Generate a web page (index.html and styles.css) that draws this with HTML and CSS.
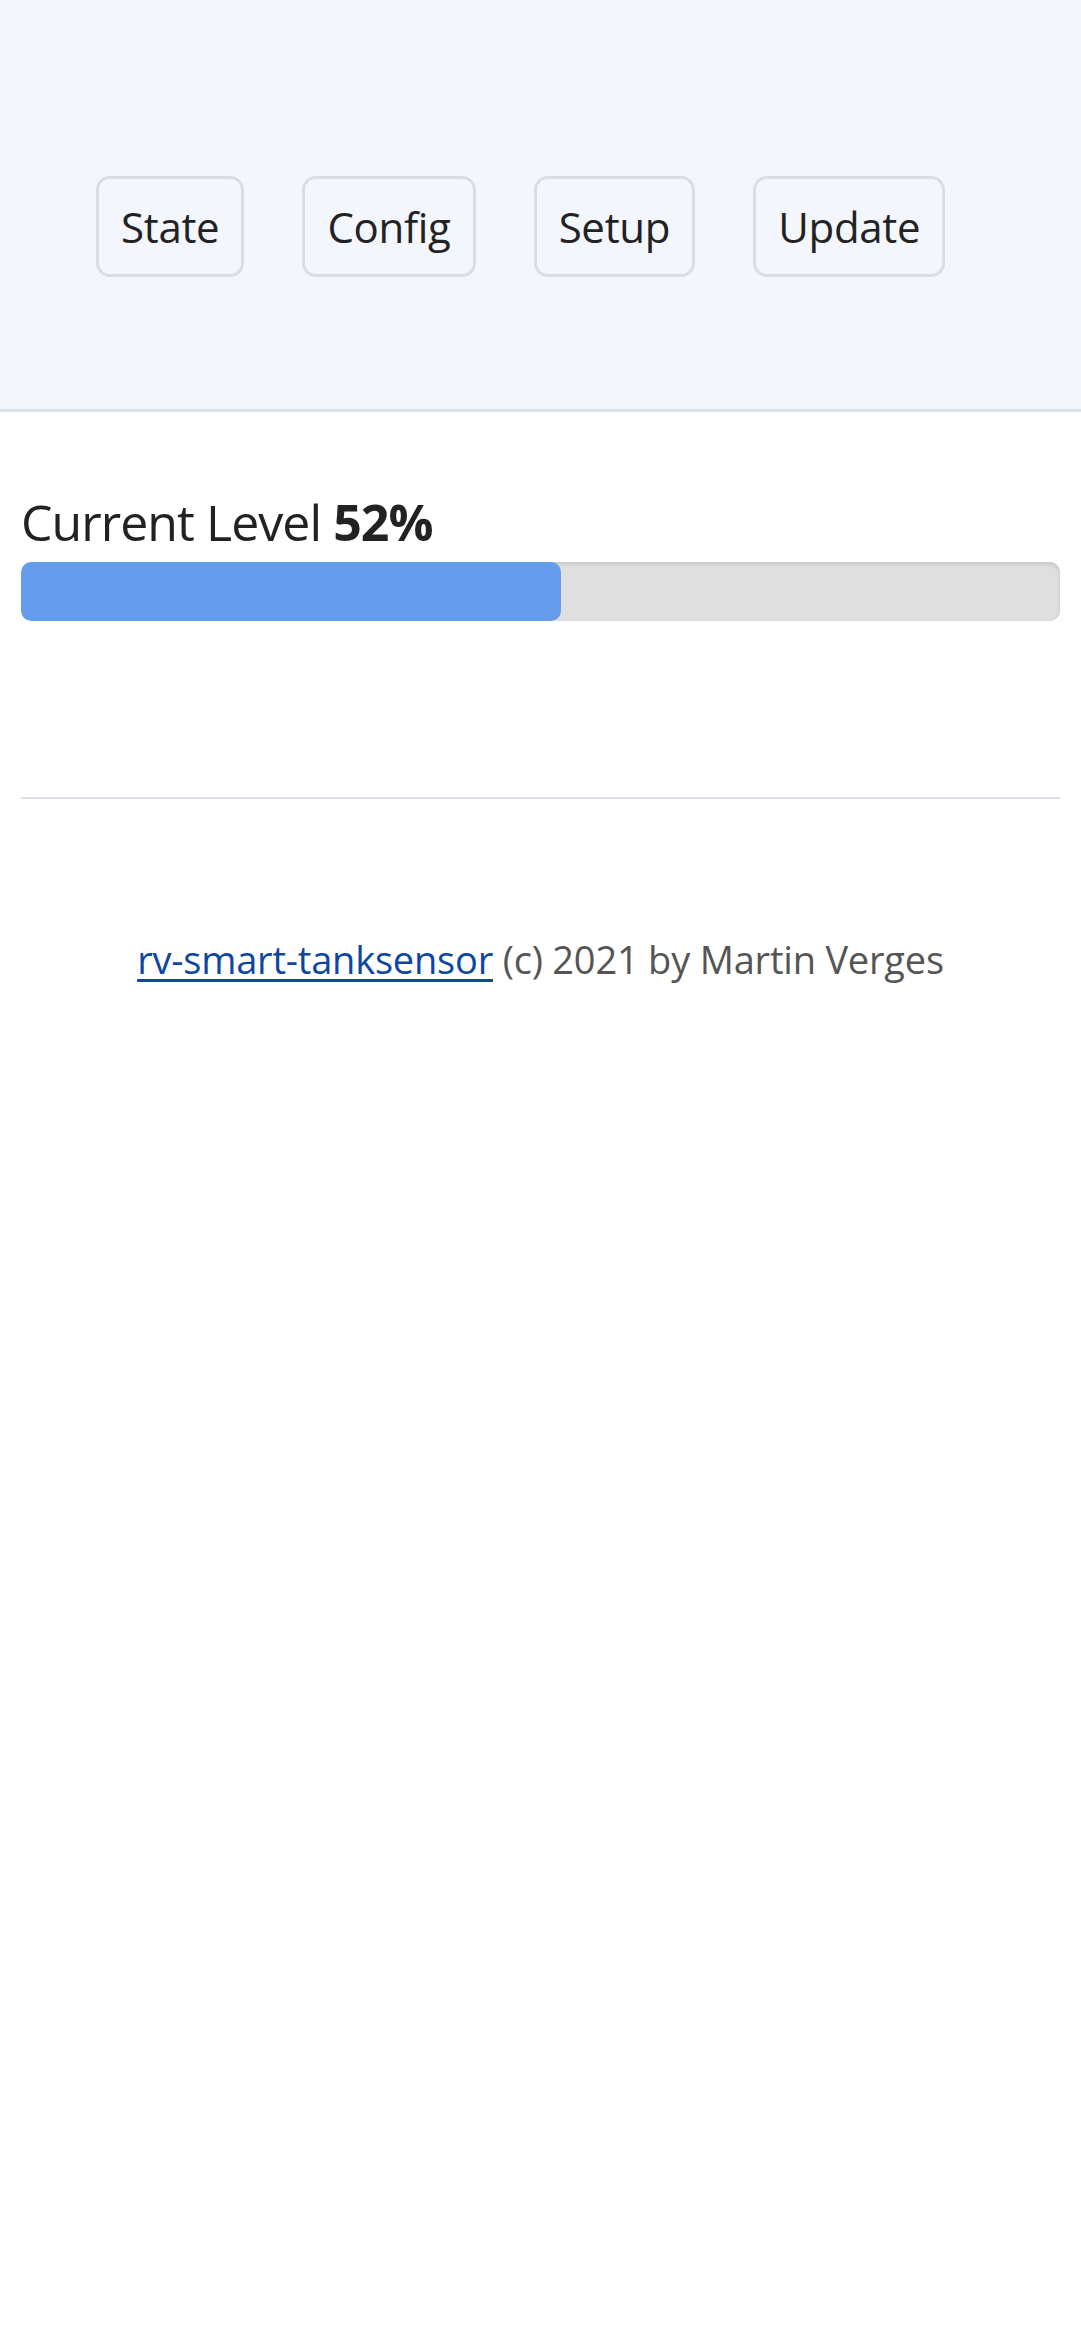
FILE: index.html
```html
<!DOCTYPE html>
<html lang="en">
<head>
<meta charset="utf-8">
<title>rv-smart-tanksensor</title>
<link rel="stylesheet" href="styles.css">
</head>
<body>
<header class="topbar">
  <nav class="menu">
    <a class="menu-btn" href="#">State</a>
    <a class="menu-btn" href="#">Config</a>
    <a class="menu-btn" href="#">Setup</a>
    <a class="menu-btn" href="#">Update</a>
  </nav>
</header>
<main class="content">
  <div class="level-label">Current Level <strong>52%</strong></div>
  <div class="bar">
    <div class="bar-fill" style="width: 52%"></div>
  </div>
  <hr class="divider">
  <footer class="footer">
    <a class="footer-link" href="#">rv-smart-tanksensor</a> (c) 2021 by Martin Verges
  </footer>
</main>
</body>
</html>
```
FILE: styles.css
```css
html, body {
  margin: 0;
  padding: 0;
  background: #ffffff;
}

body {
  font-family: "Open Sans", "Noto Sans", sans-serif;
  color: #222222;
}

.topbar {
  box-sizing: border-box;
  height: 412px;
  background: #f3f6fd;
  border-bottom: 3px solid #dbdfe7;
  padding: 176px 0 0 96px;
}

.menu {
  display: flex;
  gap: 58px;
}

.menu-btn {
  box-sizing: border-box;
  height: 101px;
  display: flex;
  align-items: center;
  padding: 0 22px;
  border: 3px solid #d9dde5;
  border-radius: 14px;
  font-size: 42px;
  color: #222222;
  text-decoration: none;
  letter-spacing: -0.3px;
}

.content {
  padding: 0 21px;
}

.level-label {
  margin-top: 79px;
  font-size: 50px;
  line-height: 63px;
  letter-spacing: -0.95px;
  color: #222222;
}

.level-label strong {
  font-weight: 700;
}

.bar {
  margin-top: 8px;
  height: 59px;
  background: #dfdfdf;
  border-radius: 10px;
  box-shadow: inset 0 2px 4px rgba(0, 0, 0, 0.12);
  overflow: hidden;
}

.bar-fill {
  height: 100%;
  background: #669cec;
  border-radius: 10px;
}

.divider {
  margin: 176px 0 0 0;
  border: 0;
  height: 2px;
  background: #dde0e6;
}

.footer {
  margin-top: 135px;
  text-align: center;
  font-size: 38px;
  line-height: 50px;
  color: #555555;
  letter-spacing: -0.2px;
}

.footer-link {
  color: #0d47a1;
  text-decoration: underline;
  text-decoration-thickness: 3px;
  text-underline-offset: 5px;
}
```
